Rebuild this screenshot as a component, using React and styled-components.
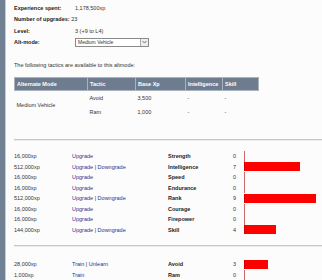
import styled, { createGlobalStyle } from "styled-components";

const GlobalStyle = createGlobalStyle`
  html, body {
    margin: 0;
    padding: 0;
    background: #fcfcfc;
  }
  body {
    font-family: "Liberation Sans", Arial, sans-serif;
    font-size: 5.5px;
    color: #333;
  }
`;

const Page = styled.div`
  display: flex;
  min-height: 280px;
  width: 322px;
  overflow: hidden;
`;

const Sidebar = styled.div`
  width: 5px;
  flex: none;
  background: #708194;
  border-right: 1px solid #c9cdd3;
`;

const Content = styled.div`
  flex: 1;
  padding: 2px 0 0 8px;
`;

const Info = styled.div`
  display: grid;
  grid-template-columns: 61px auto;
  grid-auto-rows: 11.5px;
  align-items: center;
`;

const Label = styled.div`
  font-weight: bold;
  color: #222;
  white-space: nowrap;
`;

const Value = styled.div`
  font-weight: normal;
  color: #333;
  white-space: nowrap;
`;

const Select = styled.div`
  width: 70px;
  height: 7px;
  border: 1px solid #8a8a8a;
  background: #fff;
  display: flex;
  align-items: center;
  justify-content: space-between;
  padding-left: 2px;
  font-size: 5px;
`;

const Arrow = styled.div`
  width: 7px;
  height: 7px;
  border-left: 1px solid #aaa;
  background: #eee;
  display: flex;
  align-items: center;
  justify-content: center;
`;

const Note = styled.p`
  margin: 14px 0 9px;
`;

const Tactics = styled.table`
  border-collapse: collapse;
  width: 244px;
  table-layout: fixed;
  th {
    background: #6d7c8f;
    color: #fff;
    font-weight: bold;
    text-align: left;
    height: 12px;
    padding: 0 2px;
    border: 1px solid #a9b2bd;
  }
  td {
    height: 14px;
    padding: 0 2px;
    vertical-align: middle;
  }
`;

const Rule = styled.div`
  height: 0;
  border-top: 1px solid #c6c6c6;
  border-bottom: 1px solid #ececec;
  margin: ${(p) => p.$top}px 0 ${(p) => p.$bottom}px;
`;

const Stats = styled.div`
  display: grid;
  grid-template-columns: 58px 96px 65px 11px 1fr;
  grid-auto-rows: 10.5px;
  align-items: center;
`;

const Links = styled.div`
  color: #2f2f8f;
  white-space: nowrap;
`;

const Sep = styled.span`
  color: #333;
`;

const StatName = styled.div`
  font-weight: bold;
  color: #222;
`;

const Bar = styled.div`
  height: ${(p) => (p.$zero ? "10.5px" : "9px")};
  background: ${(p) => (p.$zero ? "#cf6b6b" : "#ff0000")};
  border-left: ${(p) => (p.$zero ? "none" : "1px solid #d40000")};
  box-sizing: border-box;
`;

const upgrades = [
  ["16,000xp", false, "Strength", 0],
  ["512,000xp", true, "Intelligence", 7],
  ["16,000xp", false, "Speed", 0],
  ["16,000xp", false, "Endurance", 0],
  ["512,000xp", true, "Rank", 9],
  ["16,000xp", false, "Courage", 0],
  ["16,000xp", false, "Firepower", 0],
  ["144,000xp", true, "Skill", 4],
];

const training = [
  ["28,000xp", true, "Avoid", 3],
  ["1,000xp", false, "Ram", 0],
];

function StatRows({ rows, verb, undo }) {
  return (
    <Stats>
      {rows.map(([xp, both, name, v]) => (
        <Row key={name} xp={xp} both={both} name={name} v={v} verb={verb} undo={undo} />
      ))}
    </Stats>
  );
}

function Row({ xp, both, name, v, verb, undo }) {
  return (
    <>
      <Value>{xp}</Value>
      <Links>
        {verb}
        {both && (
          <>
            {" "}
            <Sep>|</Sep> {undo}
          </>
        )}
      </Links>
      <StatName>{name}</StatName>
      <Value>{v}</Value>
      <div>
        <Bar $zero={v === 0} style={{ width: v === 0 ? 1 : v * 8 }} />
      </div>
    </>
  );
}

export default function App() {
  return (
    <>
      <GlobalStyle />
      <Page>
        <Sidebar />
        <Content>
          <Info>
            <Label>Experience spent:</Label>
            <Value>1,178,500xp</Value>
            <Label>
              Number of upgrades: <Value as="span">23</Value>
            </Label>
            <div />
            <Label>Level:</Label>
            <Value>3 (+9 to L4)</Value>
            <Label>Alt-mode:</Label>
            <Select>
              Medium Vehicle
              <Arrow>
                <svg width="5" height="4" viewBox="0 0 5 4">
                  <path d="M0.5 1 L2.5 3 L4.5 1" fill="none" stroke="#555" strokeWidth="0.8" />
                </svg>
              </Arrow>
            </Select>
          </Info>
          <Note>The following tactics are available to this altmode:</Note>
          <Tactics>
            <colgroup>
              <col style={{ width: 73 }} />
              <col style={{ width: 48 }} />
              <col style={{ width: 50 }} />
              <col style={{ width: 37 }} />
              <col style={{ width: 36 }} />
            </colgroup>
            <thead>
              <tr>
                <th>Alternate Mode</th>
                <th>Tactic</th>
                <th>Base Xp</th>
                <th>Intelligence</th>
                <th>Skill</th>
              </tr>
            </thead>
            <tbody>
              <tr>
                <td rowSpan={2}>Medium Vehicle</td>
                <td>Avoid</td>
                <td>3,500</td>
                <td>-</td>
                <td>-</td>
              </tr>
              <tr>
                <td>Ram</td>
                <td>1,000</td>
                <td>-</td>
                <td>-</td>
              </tr>
            </tbody>
          </Tactics>
          <Rule $top={20} $bottom={10} />
          <StatRows rows={upgrades} verb="Upgrade" undo="Downgrade" />
          <Rule $top={10} $bottom={12} />
          <StatRows rows={training} verb="Train" undo="Unlearn" />
        </Content>
      </Page>
    </>
  );
}
